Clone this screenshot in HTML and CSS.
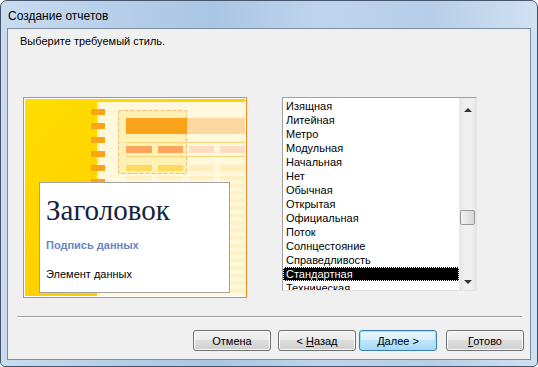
FILE: index.html
```html
<!DOCTYPE html>
<html lang="ru">

<head>
    <meta charset="UTF-8">
    <title>Создание отчетов</title>
    <link rel="stylesheet" href="styles.css">
</head>

<body>
    <div class="window">
        <div class="titlebar">Создание отчетов</div>

        <div class="client">
            <p class="prompt">Выберите требуемый стиль.</p>

            <div class="content">
                <!-- предпросмотр стиля -->
                <div class="preview">
                    <svg class="preview-art" width="220" height="197" viewBox="0 0 220 197">
                        <defs>
                            <linearGradient id="gold" x1="0" y1="0" x2="1" y2="1">
                                <stop offset="0" stop-color="#ffde00" />
                                <stop offset="1" stop-color="#ffc400" />
                            </linearGradient>
                            <pattern id="rows" x="0" y="77" width="220" height="7.5" patternUnits="userSpaceOnUse">
                                <rect x="101" y="0" width="26" height="4" fill="#fff0c4" />
                                <rect x="133" y="0" width="25" height="4" fill="#fff0c4" />
                                <rect x="164" y="0" width="25" height="4" fill="#fff0c4" />
                                <rect x="195" y="0" width="25" height="4" fill="#fff0c4" />
                            </pattern>
                        </defs>
                        <rect width="220" height="197" fill="url(#gold)" />
                        <rect x="72" y="3" width="148" height="194" fill="#fff8dc" />
                        <rect x="72" y="3" width="3" height="194" fill="#fff2b0" />
                        <rect x="0" y="77" width="220" height="120" fill="url(#rows)" />

                        <g fill="#f9a51c">
                            <rect x="66" y="10" width="14" height="6" />
                            <rect x="66" y="24" width="14" height="6" />
                            <rect x="66" y="38" width="14" height="6" />
                            <rect x="66" y="52" width="14" height="6" />
                            <rect x="66" y="66" width="14" height="6" />
                            <rect x="66" y="80" width="14" height="6" />
                            <rect x="66" y="94" width="14" height="6" />
                            <rect x="66" y="108" width="14" height="6" />
                        </g>

                        <rect x="93.5" y="11.5" width="68" height="63" fill="#fff0b4" stroke="#f9be7c" stroke-dasharray="4 2" />

                        <rect x="101" y="19" width="61" height="16" fill="#f9a21a" />
                        <rect x="162" y="19" width="58" height="16" fill="#fdd7a2" />
                        <rect x="101" y="43" width="119" height="1" fill="#fbd27a" />
                        <rect x="101" y="47" width="26" height="7" fill="#fda55a" />
                        <rect x="133" y="47" width="25" height="7" fill="#fda55a" />
                        <rect x="164" y="47" width="25" height="7" fill="#fedcc4" />
                        <rect x="195" y="47" width="25" height="7" fill="#fedcc4" />
                        <rect x="101" y="57" width="119" height="1" fill="#fbd27a" />
                        <rect x="101" y="66" width="26" height="6" fill="#ffd860" />
                        <rect x="133" y="66" width="25" height="6" fill="#ffd860" />
                        <rect x="164" y="66" width="25" height="6" fill="#ffedbc" />
                        <rect x="195" y="66" width="25" height="6" fill="#ffedbc" />
                    </svg>

                    <div class="preview-card">
                        <div class="card-title">Заголовок</div>
                        <div class="card-label">Подпись данных</div>
                        <div class="card-item">Элемент данных</div>
                    </div>
                </div>

                <!-- список стилей -->
                <div class="listbox">
                    <ul class="list-items">
                        <li>Изящная</li>
                        <li>Литейная</li>
                        <li>Метро</li>
                        <li>Модульная</li>
                        <li>Начальная</li>
                        <li>Нет</li>
                        <li>Обычная</li>
                        <li>Открытая</li>
                        <li>Официальная</li>
                        <li>Поток</li>
                        <li>Солнцестояние</li>
                        <li>Справедливость</li>
                        <li class="selected">Стандартная</li>
                        <li>Техническая</li>
                    </ul>
                    <div class="scrollbar">
                        <div class="arrow arrow-up"></div>
                        <div class="track">
                            <div class="thumb"></div>
                        </div>
                        <div class="arrow arrow-down"></div>
                    </div>
                </div>
            </div>

            <div class="separator"></div>

            <div class="buttons">
                <button class="btn">Отмена</button>
                <button class="btn btn-back">&lt; <u>Н</u>азад</button>
                <button class="btn btn-default"><u>Д</u>алее &gt;</button>
                <button class="btn btn-finish"><u>Г</u>отово</button>
            </div>
        </div>
    </div>
</body>

</html>
```

FILE: styles.css
```css
* {
    margin: 0;
    padding: 0;
    box-sizing: border-box;
}

body {
    background: #fff;
    font-family: "Liberation Sans", Arial, sans-serif;
    font-size: 11px;
    color: #000;
}

/* окно */
.window {
    width: 538px;
    height: 367px;
    border: 1px solid #46566a;
    border-radius: 7px 7px 5px 5px;
    padding: 0 6px 6px 6px;
    background: linear-gradient(to right, #c9dcf0 0%, #b3cde8 25%, #a9c6e4 40%, #bfd5ed 60%, #b6cee8 80%, #d0e1f2 100%);
    display: flex;
    flex-direction: column;
}

.titlebar {
    height: 27px;
    padding: 8px 0 0 1px;
    font-size: 12px;
    line-height: 14px;
    color: #000;
}

.client {
    flex: 1;
    background: #f0f0f0;
    border: 1px solid #7d8d9f;
    display: flex;
    flex-direction: column;
}

.prompt {
    margin: 6px 0 0 12px;
    line-height: 13px;
}

.content {
    display: flex;
    align-items: flex-start;
    margin-top: 49px;
}

/* предпросмотр */
.preview {
    position: relative;
    margin-left: 15px;
    width: 224px;
    height: 201px;
    border: 1px solid #f5861f;
    padding: 1px;
    background: #fff;
}

.preview-art {
    display: block;
}

.preview-card {
    position: absolute;
    left: 15px;
    top: 84px;
    width: 191px;
    height: 111px;
    background: #fff;
    border: 1px solid #a3a3a3;
    padding: 0 0 0 6px;
}

.card-title {
    margin-top: 11px;
    font-family: "Liberation Serif", "Times New Roman", serif;
    font-size: 29px;
    line-height: 33px;
    color: #13223f;
}

.card-label {
    margin-top: 12px;
    font-weight: bold;
    color: #6686c6;
    line-height: 13px;
}

.card-item {
    margin-top: 16px;
    line-height: 13px;
}

/* список */
.listbox {
    margin-left: 35px;
    width: 195px;
    height: 194px;
    background: #fff;
    border: 1px solid;
    border-color: #a0a0a0 #e3e3e3 #e3e3e3 #a0a0a0;
    display: flex;
    overflow: hidden;
}

.list-items {
    list-style: none;
    flex: 1;
    padding-top: 1px;
}

.list-items li {
    height: 14px;
    line-height: 14px;
    padding-left: 3px;
    white-space: nowrap;
}

.list-items li.selected {
    background: #000;
    color: #fff;
    outline: 1px dotted #fff;
    outline-offset: -1px;
}

.scrollbar {
    width: 17px;
    background: linear-gradient(to right, #e6e6e6, #f0f0f0 30%, #f0f0f0 70%, #e6e6e6);
    display: flex;
    flex-direction: column;
    border-left: 1px solid #e8e8e8;
}

.arrow {
    height: 20px;
    display: flex;
    align-items: center;
    justify-content: center;
}

.arrow::before {
    content: "";
    border-left: 4px solid transparent;
    border-right: 4px solid transparent;
}

.arrow-up::before {
    margin-top: 4px;
    border-bottom: 4px solid #333;
}

.arrow-down::before {
    margin-top: 4px;
    border-top: 4px solid #333;
}

.track {
    flex: 1;
    position: relative;
}

.thumb {
    position: absolute;
    left: 0;
    top: 92px;
    width: 15px;
    height: 15px;
    border: 1px solid #979797;
    border-radius: 2px;
    background: linear-gradient(to right, #f2f2f2, #e4e4e4 50%, #d6d6d6);
}

/* разделитель и кнопки */
.separator {
    margin: 18px 8px 0 9px;
    height: 2px;
    border-top: 1px solid #a0a0a0;
    border-bottom: 1px solid #fff;
}

.buttons {
    display: flex;
    justify-content: flex-end;
    margin-top: 12px;
    padding-right: 6px;
}

.btn {
    width: 78px;
    height: 21px;
    font-family: "Liberation Sans", Arial, sans-serif;
    font-size: 11px;
    color: #000;
    border: 1px solid #707070;
    border-radius: 3px;
    background: linear-gradient(#f2f2f2 0%, #ebebeb 45%, #dddddd 50%, #cfcfcf 100%);
    box-shadow: inset 0 0 0 1px #fbfbfb;
}

.btn u {
    text-decoration: underline;
}

.btn-back {
    margin-left: 7px;
}

.btn-default {
    margin-left: 3px;
    border-color: #3c7fb1;
    background: linear-gradient(#eaf6fd 0%, #d9f0fc 45%, #bee6fd 50%, #a7d9f5 100%);
    box-shadow: inset 0 0 0 1px #9ee0f8;
}

.btn-finish {
    margin-left: 9px;
}
```
